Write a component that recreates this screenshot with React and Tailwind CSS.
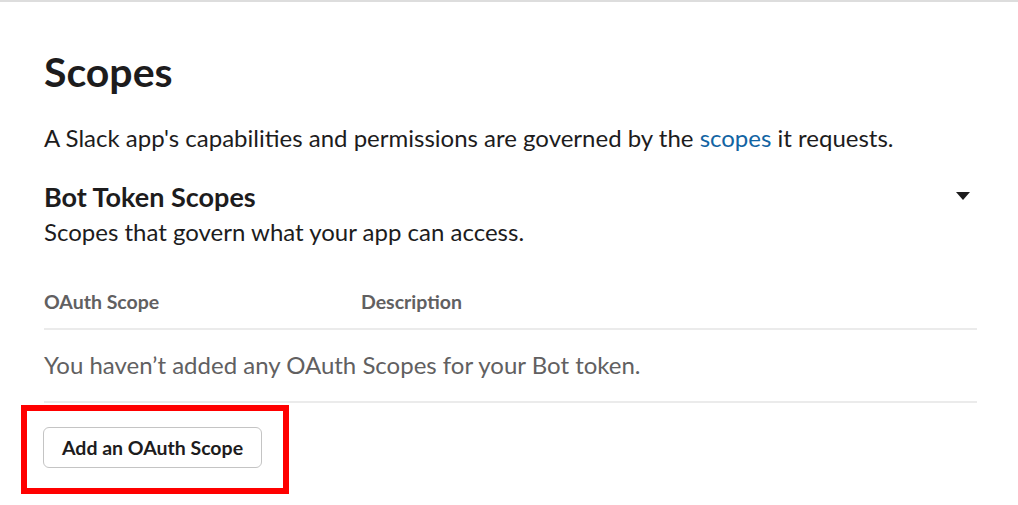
import React from 'react';

const ScopesPanel = () => {
  return (
    <div
      className="min-h-screen bg-white border-t-2 border-[#dddddd] text-[#1d1c1d]"
      style={{ fontFamily: 'Lato, "Noto Sans", sans-serif' }}
    >
      <div className="pl-[44px] pr-[41px] pt-[47px]">
        <h1 className="text-[41px] leading-[46px] font-bold">Scopes</h1>
        <p className="mt-[29px] text-[24px] leading-[28px]">
          A Slack app's capabilities and permissions are governed by the{' '}
          <a href="#" className="text-[#1264a3]">scopes</a> it requests.
        </p>

        {/* bot token section */}
        <div className="mt-[30px] flex items-center justify-between">
          <h2 className="text-[27px] leading-[30px] font-bold">Bot Token Scopes</h2>
          <svg width="14" height="8" viewBox="0 0 14 8" className="mr-[7px] mt-[-2px]">
            <path d="M0 0 L14 0 L7 8 Z" fill="#1d1c1d" />
          </svg>
        </div>
        <p className="mt-[6px] text-[24px] leading-[28px]">Scopes that govern what your app can access.</p>

        <div className="mt-[44px] flex text-[19.5px] leading-[24px] font-bold text-[#616061] pb-[14px] border-b-2 border-[#ebebeb]">
          <div className="w-[317px]">OAuth Scope</div>
          <div>Description</div>
        </div>
        <div className="pt-[21px] pb-[22px] text-[24px] leading-[28px] text-[#616061] border-b-2 border-[#ebebeb]">
          You haven’t added any OAuth Scopes for your Bot token.
        </div>

        <div className="mt-[24px] -ml-[1px] relative inline-block">
          <button className="h-[41px] px-[18px] rounded-[6px] border border-[#c4c4c4] bg-white text-[19.5px] font-bold text-[#1d1c1d]">
            Add an OAuth Scope
          </button>
          {/* red highlight box */}
          <div className="absolute -left-[22px] -top-[22px] -right-[27px] -bottom-[26px] border-[6px] border-[#ff0000]"></div>
        </div>
      </div>
    </div>
  );
};

export default ScopesPanel;
